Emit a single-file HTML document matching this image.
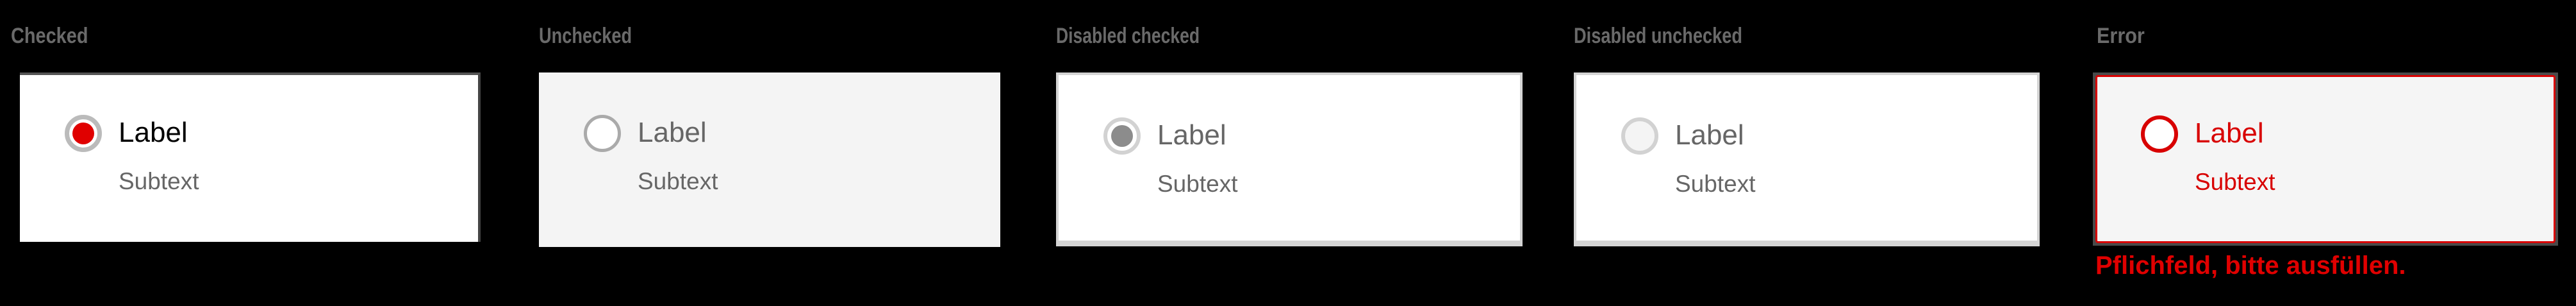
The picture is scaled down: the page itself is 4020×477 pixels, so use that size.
<!DOCTYPE html>
<html><head><meta charset="utf-8"><style>
html,body{margin:0;padding:0;background:#000;width:4020px;height:477px;overflow:hidden;font-family:"Liberation Sans",Arial,sans-serif}
.h{position:absolute;top:38px;height:36px;color:#6a6a6a;font-weight:bold;font-size:34px;line-height:36px;white-space:nowrap;transform-origin:left top}
.card{position:absolute;top:113px;box-sizing:border-box;border-radius:4px}
.r{position:absolute;left:70px;top:66px;width:58px;height:58px;box-sizing:border-box;border-radius:50%}
.lab{position:absolute;left:154px;top:69px;font-size:44px;line-height:50px}
.sub{position:absolute;left:154px;top:148px;font-size:37px;line-height:44px;color:#666}
</style></head><body>
<div class="h" style="left:17px;width:123px"><span style="display:inline-block;transform:scaleX(.85);transform-origin:left">Checked</span></div>
<div class="h" style="left:841px"><span style="display:inline-block;transform:scaleX(.8);transform-origin:left">Unchecked</span></div>
<div class="h" style="left:1648px"><span style="display:inline-block;transform:scaleX(.78);transform-origin:left">Disabled checked</span></div>
<div class="h" style="left:2456px"><span style="display:inline-block;transform:scaleX(.8);transform-origin:left">Disabled unchecked</span></div>
<div class="h" style="left:3272px"><span style="display:inline-block;transform:scaleX(.9);transform-origin:left">Error</span></div>

<div class="card" style="left:31px;width:719px;height:264px;background:#fff;border-top:4px solid #555;border-right:4px solid #444;border-radius:0">
  <div class="r" style="left:70px;top:62px;border:7px solid #bbb;background:#fff"><div style="position:absolute;left:5px;top:5px;width:34px;height:34px;border-radius:50%;background:#e00000"></div></div>
  <div class="lab" style="top:65px;color:#000">Label</div>
  <div class="sub" style="top:144px">Subtext</div>
</div>

<div class="card" style="left:841px;width:720px;height:272px;background:#f4f4f4;border-radius:0">
  <div class="r" style="border:5px solid #aaa;background:#fff"></div>
  <div class="lab" style="color:#666">Label</div>
  <div class="sub">Subtext</div>
</div>

<div class="card" style="left:1648px;width:728px;height:271px;background:#fff;border:4px solid #d4d4d4;border-bottom-width:9px;border-radius:0">
  <div class="r" style="border:6px solid #d2d2d2;background:#fff"><div style="position:absolute;left:6px;top:6px;width:34px;height:34px;border-radius:50%;background:#8c8c8c"></div></div>
  <div class="lab" style="color:#666">Label</div>
  <div class="sub">Subtext</div>
</div>

<div class="card" style="left:2456px;width:727px;height:271px;background:#fff;border:4px solid #d4d4d4;border-bottom-width:9px;border-radius:0">
  <div class="r" style="border:6px solid #d2d2d2;background:#f4f4f4"></div>
  <div class="lab" style="color:#666">Label</div>
  <div class="sub">Subtext</div>
</div>

<div class="card" style="left:3266px;width:726px;height:270px;background:#4a4a4a;border-radius:0;padding:4px">
  <div style="position:absolute;left:4px;top:4px;right:4px;bottom:4px;background:#f5f5f5;border:3px solid #d80000;border-radius:4px;box-sizing:border-box">
    <div class="r" style="left:68px;top:60px;border:6px solid #d80000;background:#fff"></div>
    <div class="lab" style="left:152px;top:63px;color:#d80000">Label</div>
    <div class="sub" style="left:152px;top:142px;color:#d80000">Subtext</div>
  </div>
</div>
<div style="position:absolute;left:3270px;top:393px;color:#e00000;font-weight:bold;font-size:40px;line-height:42px;white-space:nowrap;transform:scaleX(1);transform-origin:left top">Pflichfeld, bitte ausfüllen.</div>
</body></html>
